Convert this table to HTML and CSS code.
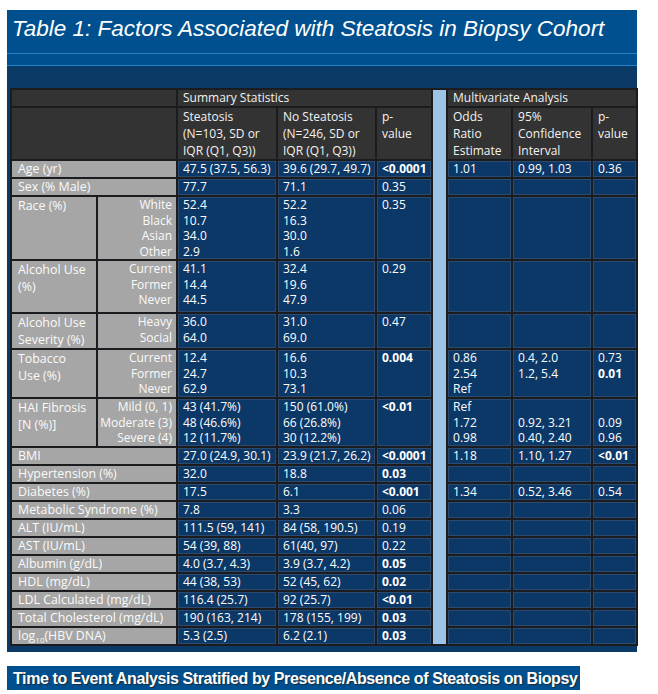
FILE: index.html
```html
<!DOCTYPE html>
<html lang="en">
<head>
    <meta charset="UTF-8">
    <title>Table 1: Factors Associated with Steatosis</title>
    <link rel="stylesheet" href="styles.css">
</head>
<body>
    <div class="panel">
        <h1 class="panel-title">Table 1: Factors Associated with Steatosis in Biopsy Cohort</h1>
        <div class="band"></div>
        <div class="band-dark"></div>

        <table class="stats">
            <colgroup>
                <col class="c-label">
                <col class="c-sub">
                <col class="c-steat">
                <col class="c-nosteat">
                <col class="c-p">
                <col class="c-sep">
                <col class="c-odds">
                <col class="c-ci">
                <col class="c-p2">
            </colgroup>
            <tr class="h1">
                <td class="head" colspan="2"></td>
                <td class="head" colspan="3">Summary Statistics</td>
                <td class="sep" rowspan="20"></td>
                <td class="head" colspan="3">Multivariate Analysis</td>
            </tr>
            <tr class="h2">
                <td class="head" colspan="2"></td>
                <td class="head">Steatosis<br>(N=103, SD or<br>IQR (Q1, Q3))</td>
                <td class="head">No Steatosis<br>(N=246, SD or<br>IQR (Q1, Q3))</td>
                <td class="head">p-<br>value</td>
                <td class="head">Odds<br>Ratio<br>Estimate</td>
                <td class="head">95%<br>Confidence<br>Interval</td>
                <td class="head">p-<br>value</td>
            </tr>
            <tr class="r1">
                <td class="label" colspan="2">Age (yr)</td>
                <td>47.5 (37.5, 56.3)</td><td>39.6 (29.7, 49.7)</td><td><b>&lt;0.0001</b></td>
                <td>1.01</td><td>0.99, 1.03</td><td>0.36</td>
            </tr>
            <tr class="r1">
                <td class="label" colspan="2">Sex (% Male)</td>
                <td>77.7</td><td>71.1</td><td>0.35</td>
                <td></td><td></td><td></td>
            </tr>
            <tr class="r4">
                <td class="label">Race (%)</td>
                <td class="label sub">White<br>Black<br>Asian<br>Other</td>
                <td>52.4<br>10.7<br>34.0<br>2.9</td>
                <td>52.2<br>16.3<br>30.0<br>1.6</td>
                <td>0.35</td>
                <td></td><td></td><td></td>
            </tr>
            <tr class="r3">
                <td class="label">Alcohol Use<br>(%)</td>
                <td class="label sub">Current<br>Former<br>Never</td>
                <td>41.1<br>14.4<br>44.5</td>
                <td>32.4<br>19.6<br>47.9</td>
                <td>0.29</td>
                <td></td><td></td><td></td>
            </tr>
            <tr class="r2">
                <td class="label">Alcohol Use<br>Severity (%)</td>
                <td class="label sub">Heavy<br>Social</td>
                <td>36.0<br>64.0</td>
                <td>31.0<br>69.0</td>
                <td>0.47</td>
                <td></td><td></td><td></td>
            </tr>
            <tr class="r3b">
                <td class="label">Tobacco<br>Use (%)</td>
                <td class="label sub">Current<br>Former<br>Never</td>
                <td>12.4<br>24.7<br>62.9</td>
                <td>16.6<br>10.3<br>73.1</td>
                <td><b>0.004</b></td>
                <td>0.86<br>2.54<br>Ref</td>
                <td>0.4, 2.0<br>1.2, 5.4</td>
                <td>0.73<br><b>0.01</b></td>
            </tr>
            <tr class="r3b">
                <td class="label">HAI Fibrosis<br>[N (%)]</td>
                <td class="label sub">Mild (0, 1)<br>Moderate (3)<br>Severe (4)</td>
                <td>43 (41.7%)<br>48 (46.6%)<br>12 (11.7%)</td>
                <td>150 (61.0%)<br>66 (26.8%)<br>30 (12.2%)</td>
                <td><b>&lt;0.01</b></td>
                <td>Ref<br>1.72<br>0.98</td>
                <td><br>0.92, 3.21<br>0.40, 2.40</td>
                <td><br>0.09<br>0.96</td>
            </tr>
            <tr class="r1">
                <td class="label" colspan="2">BMI</td>
                <td>27.0 (24.9, 30.1)</td><td>23.9 (21.7, 26.2)</td><td><b>&lt;0.0001</b></td>
                <td>1.18</td><td>1.10, 1.27</td><td><b>&lt;0.01</b></td>
            </tr>
            <tr class="r1">
                <td class="label" colspan="2">Hypertension (%)</td>
                <td>32.0</td><td>18.8</td><td><b>0.03</b></td>
                <td></td><td></td><td></td>
            </tr>
            <tr class="r1">
                <td class="label" colspan="2">Diabetes (%)</td>
                <td>17.5</td><td>6.1</td><td><b>&lt;0.001</b></td>
                <td>1.34</td><td>0.52, 3.46</td><td>0.54</td>
            </tr>
            <tr class="r1">
                <td class="label" colspan="2">Metabolic Syndrome (%)</td>
                <td>7.8</td><td>3.3</td><td>0.06</td>
                <td></td><td></td><td></td>
            </tr>
            <tr class="r1">
                <td class="label" colspan="2">ALT (IU/mL)</td>
                <td>111.5 (59, 141)</td><td>84 (58, 190.5)</td><td>0.19</td>
                <td></td><td></td><td></td>
            </tr>
            <tr class="r1">
                <td class="label" colspan="2">AST (IU/mL)</td>
                <td>54 (39, 88)</td><td>61(40, 97)</td><td>0.22</td>
                <td></td><td></td><td></td>
            </tr>
            <tr class="r1">
                <td class="label" colspan="2">Albumin (g/dL)</td>
                <td>4.0 (3.7, 4.3)</td><td>3.9 (3.7, 4.2)</td><td><b>0.05</b></td>
                <td></td><td></td><td></td>
            </tr>
            <tr class="r1">
                <td class="label" colspan="2">HDL (mg/dL)</td>
                <td>44 (38, 53)</td><td>52 (45, 62)</td><td><b>0.02</b></td>
                <td></td><td></td><td></td>
            </tr>
            <tr class="r1">
                <td class="label" colspan="2">LDL Calculated (mg/dL)</td>
                <td>116.4 (25.7)</td><td>92 (25.7)</td><td><b>&lt;0.01</b></td>
                <td></td><td></td><td></td>
            </tr>
            <tr class="r1">
                <td class="label" colspan="2">Total Cholesterol (mg/dL)</td>
                <td>190 (163, 214)</td><td>178 (155, 199)</td><td><b>0.03</b></td>
                <td></td><td></td><td></td>
            </tr>
            <tr class="r1">
                <td class="label" colspan="2">log<sub>10</sub>(HBV DNA)</td>
                <td>5.3 (2.5)</td><td>6.2 (2.1)</td><td><b>0.03</b></td>
                <td></td><td></td><td></td>
            </tr>
        </table>
    </div>

    <div class="footer-banner">Time to Event Analysis Stratified by Presence/Absence of Steatosis on Biopsy</div>
</body>
</html>
```

FILE: styles.css
```css
body {
    margin: 0;
    padding: 10px 0 0 7px;
    background: #fff;
    font-family: "Open Sans", "Liberation Sans", sans-serif;
    color: #fff;
}
.panel {
    width: 630px;
    background-color: #0b3a66;
    padding-bottom: 6px;
}
.panel-title {
    margin: 0;
    height: 43px;
    padding: 0 0 0 5px;
    background-color: #00508f;
    font-family: "Liberation Sans", Arial, sans-serif;
    font-style: italic;
    font-weight: normal;
    font-size: 22.5px;
    line-height: 38px;
    color: #fff;
}
.band {
    height: 11px;
    background-color: #00508f;
    border-top: 1px solid #2383c6;
    border-bottom: 1px solid #2383c6;
}
.band-dark {
    height: 22px;
}
.stats {
    margin-left: 3px;
    width: 626px;
    table-layout: fixed;
    border-collapse: collapse;
    font-size: 12px;
}
.c-label { width: 86px; }
.c-sub { width: 80px; }
.c-steat { width: 100px; }
.c-nosteat { width: 99px; }
.c-p { width: 56px; }
.c-sep { width: 15px; }
.c-odds { width: 65px; }
.c-ci { width: 80px; }
.c-p2 { width: 45px; }

.stats td {
    border: 2px solid #1a1c20;
    background-color: #0c3868;
    box-shadow: inset 0 0 0 1px #2b4a6e;
    padding: 0 5px;
    vertical-align: top;
    line-height: 15.5px;
    white-space: nowrap;
    overflow: hidden;
}
.stats td.head {
    background-color: #333333;
    box-shadow: none;
    line-height: 17px;
    color: #f2f2f2;
}
.stats td.label {
    background-color: #a6a6a6;
    box-shadow: none;
    font-size: 12.4px;
    line-height: 17px;
    color: #fafafa;
    padding-left: 6px;
}
.stats td.sub {
    text-align: right;
    font-size: 12px;
    line-height: 15.5px;
    padding-left: 0;
    padding-right: 4px;
}
.stats td.sep {
    background-color: #9dc3e6;
    box-shadow: none;
    padding: 0;
}
.stats tr.h1 { height: 18px; }
.stats tr.h1 td { line-height: 16px; }
.stats tr.h2 { height: 53px; }
.stats tr.r1 { height: 18px; }
.stats tr.r1 td { line-height: 16px; }
.stats tr.r2 { height: 36px; }
.stats tr.r3 { height: 53px; }
.stats tr.r3b { height: 49px; }
.stats tr.r4 { height: 64px; }
.stats b {
    font-weight: 700;
}
.stats sub {
    font-size: 8px;
    line-height: 0;
}
.footer-banner {
    margin-top: 14px;
    width: 567px;
    height: 24px;
    padding-left: 6px;
    background-color: #00508f;
    font-family: "Liberation Sans", Arial, sans-serif;
    font-weight: bold;
    font-size: 16px;
    letter-spacing: -0.4px;
    line-height: 25px;
    color: #fff;
    text-shadow: 1px 1px 1px #1b2a3a;
}
```
